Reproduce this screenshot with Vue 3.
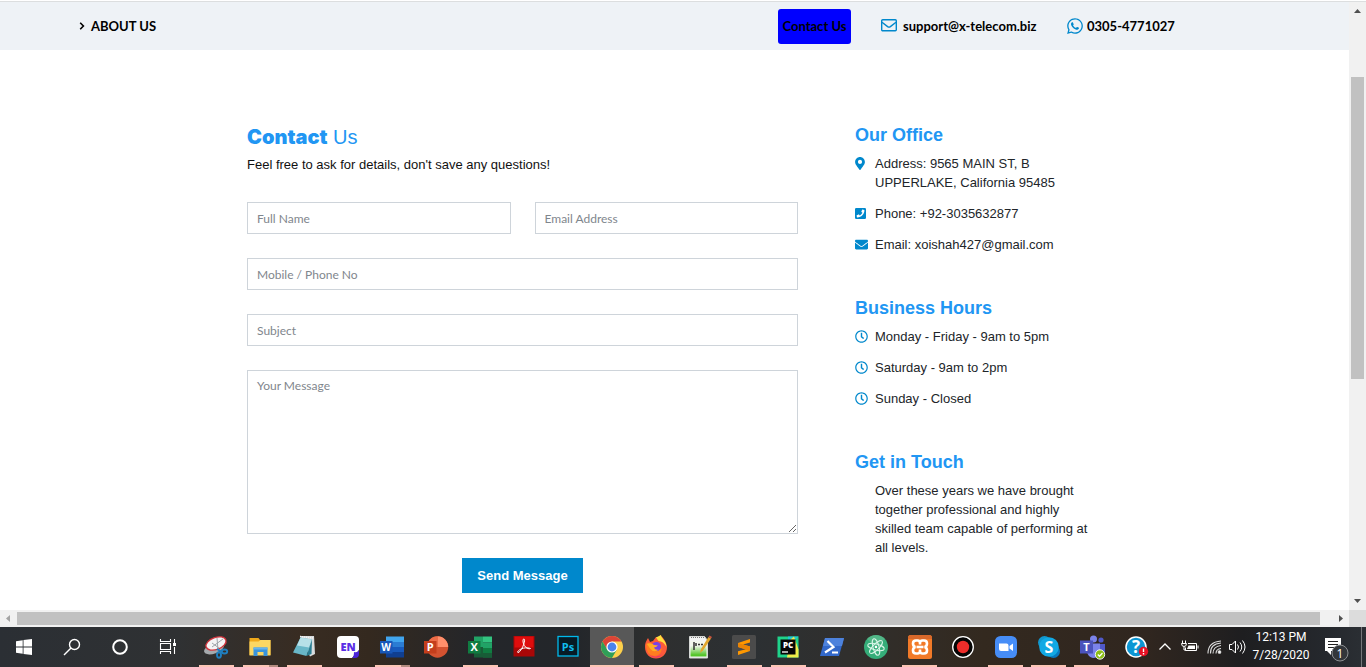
<script setup>
import { ref } from 'vue'

const fullName = ref('')
const email = ref('')
const phone = ref('')
const subject = ref('')
const message = ref('')

const hours = ['Monday - Friday - 9am to 5pm', 'Saturday - 9am to 2pm', 'Sunday - Closed']
</script>

<template>
  <div class="desktop">
    <div class="browser">
      <div class="page">
        <header class="topbar">
          <a class="nav-link about" href="#about">
            <svg class="caret" viewBox="0 0 6 8" aria-hidden="true"><path d="M1.2 .8 4.4 4 1.2 7.2" fill="none" stroke="#000" stroke-width="1.6" /></svg>
            ABOUT US
          </a>
          <nav class="nav-right">
            <a class="nav-link contact" href="#contact">Contact Us</a>
            <a class="nav-link mail" href="#mail">
              <svg width="16" height="16" viewBox="0 0 16 16" fill="none" stroke="#0088cc" stroke-width="1.4" aria-hidden="true"><rect x=".7" y="1.7" width="14.6" height="11" rx="1" /><path d="M1 4.2 6.6 8.600Q8 9.600 9.4 8.600L15 4.2" /></svg>
              support@x-telecom.biz
            </a>
            <a class="nav-link tel" href="#tel">
              <svg width="16" height="18" viewBox="0 0 448 512" fill="#0088cc" aria-hidden="true"><path d="M380.9 97.1C339 55.1 283.2 32 223.9 32c-122.4 0-222 99.6-222 222 0 39.1 10.2 77.3 29.6 111L0 480l117.7-30.9c32.4 17.7 68.9 27 106.1 27h.1c122.3 0 224.1-99.6 224.1-222 0-59.3-25.2-115-67.1-157zm-157 341.6c-33.2 0-65.7-8.9-94-25.7l-6.7-4-69.8 18.3L72 359.2l-4.4-7c-18.5-29.4-28.2-63.3-28.2-98.2 0-101.7 82.8-184.5 184.6-184.5 49.3 0 95.6 19.2 130.4 54.1 34.8 34.9 56.2 81.2 56.1 130.5 0 101.8-84.9 184.6-186.6 184.6zm101.2-138.2c-5.5-2.8-32.8-16.2-37.9-18-5.1-1.9-8.8-2.8-12.5 2.8-3.7 5.6-14.3 18-17.6 21.8-3.2 3.7-6.5 4.2-12 1.4-32.6-16.3-54-29.1-75.5-66-5.7-9.8 5.7-9.1 16.3-30.3 1.8-3.7.9-6.9-.5-9.7-1.4-2.8-12.5-30.1-17.1-41.2-4.5-10.8-9.1-9.3-12.5-9.5-3.2-.2-6.9-.2-10.6-.2-3.7 0-9.7 1.4-14.8 6.9-5.1 5.6-19.4 19-19.4 46.3 0 27.3 19.9 53.7 22.6 57.4 2.8 3.7 39.1 59.7 94.8 83.8 35.2 15.2 49 16.5 66.6 13.9 10.7-1.6 32.8-13.4 37.4-26.4 4.6-13 4.6-24.1 3.2-26.4-1.3-2.5-5-3.9-10.5-6.6z" /></svg>
              0305-4771027
            </a>
          </nav>
        </header>

        <main class="content">
          <form class="form" @submit.prevent>
            <div class="intro">
              <h2><strong>Contact</strong> Us</h2>
              <p>Feel free to ask for details, don't save any questions!</p>
            </div>
            <div class="row">
              <input v-model="fullName" class="field" type="text" placeholder="Full Name" aria-label="Full Name" />
              <input v-model="email" class="field" type="email" placeholder="Email Address" aria-label="Email Address" />
            </div>
            <input v-model="phone" class="field" type="tel" placeholder="Mobile / Phone No" aria-label="Mobile / Phone No" />
            <input v-model="subject" class="field" type="text" placeholder="Subject" aria-label="Subject" />
            <textarea v-model="message" class="field area" placeholder="Your Message" aria-label="Your Message"></textarea>
            <button class="send" type="submit">Send Message</button>
          </form>

          <aside class="side">
            <section>
              <h3>Our Office</h3>
              <ul>
                <li>
                  <svg width="10" height="13" viewBox="0 0 384 512" aria-hidden="true"><path d="M172.268 501.67C26.97 291.031 0 269.413 0 192 0 85.961 85.961 0 192 0s192 85.961 192 192c0 77.413-26.97 99.031-172.268 309.67-9.535 13.774-29.93 13.773-39.464 0zM192 272c44.183 0 80-35.817 80-80s-35.817-80-80-80-80 35.817-80 80 35.817 80 80 80z" /></svg>
                  <span>Address: 9565 MAIN ST, B<br />UPPERLAKE, California 95485</span>
                </li>
                <li>
                  <svg width="11" height="13" viewBox="0 0 448 512" aria-hidden="true"><path d="M400 32H48A48 48 0 0 0 0 80v352a48 48 0 0 0 48 48h352a48 48 0 0 0 48-48V80a48 48 0 0 0-48-48zM94 416c-7.033 0-13.057-4.873-14.616-11.627l-14.998-65a15 15 0 0 1 8.707-17.16l69.998-29.999a15 15 0 0 1 17.518 4.289l30.997 37.885c48.944-22.963 88.297-62.858 110.781-110.78l-37.886-30.997a15.001 15.001 0 0 1-4.289-17.518l30-69.998a15 15 0 0 1 17.16-8.707l65 14.998A14.997 14.997 0 0 1 384 126c0 160.292-129.945 290-290 290z" /></svg>
                  <span>Phone: +92-3035632877</span>
                </li>
                <li>
                  <svg width="13" height="13" viewBox="0 0 512 512" aria-hidden="true"><path d="M502.3 190.8c3.9-3.1 9.7-.2 9.7 4.7V400c0 26.5-21.5 48-48 48H48c-26.5 0-48-21.5-48-48V195.6c0-5 5.7-7.8 9.7-4.7 22.4 17.4 52.1 39.5 154.1 113.6 21.1 15.4 56.7 47.8 92.2 47.6 35.7.3 72-32.8 92.3-47.6 102-74.1 131.6-96.3 154-113.7zM256 320c23.2.4 56.6-29.2 73.4-41.4 132.7-96.3 142.8-104.7 173.4-128.7 5.8-4.5 9.2-11.5 9.2-18.9v-19c0-26.5-21.5-48-48-48H48c-26.5 0-48 21.5-48 48v19c0 7.4 3.4 14.3 9.2 18.9 30.6 23.9 40.7 32.4 173.4 128.7 16.8 12.2 50.2 41.8 73.4 41.4z" /></svg>
                  <span>Email: xoishah427@gmail.com</span>
                </li>
              </ul>
            </section>
            <section>
              <h3>Business Hours</h3>
              <ul>
                <li v-for="h in hours" :key="h">
                  <svg width="13" height="13" viewBox="0 0 512 512" aria-hidden="true"><path d="M256 8C119 8 8 119 8 256s111 248 248 248 248-111 248-248S393 8 256 8zm0 448c-110.5 0-200-89.5-200-200S145.5 56 256 56s200 89.5 200 200-89.5 200-200 200zm61.8-104.4l-84.9-61.7c-3.1-2.3-4.9-5.9-4.9-9.7V116c0-6.6 5.4-12 12-12h32c6.6 0 12 5.4 12 12v141.7l66.8 48.6c5.4 3.9 6.5 11.4 2.6 16.8L334.6 349c-3.9 5.3-11.4 6.5-16.8 2.6z" /></svg>
                  <span>{{ h }}</span>
                </li>
              </ul>
            </section>
            <section>
              <h3>Get in Touch</h3>
              <p class="touch">Over these years we have brought together professional and highly skilled team capable of performing at all levels.</p>
            </section>
          </aside>
        </main>
      </div>

      <div class="vbar" aria-hidden="true">
        <svg class="arrow" viewBox="0 0 17 17"><path d="M5 11h7L8.500 7z" fill="#505050" /></svg>
        <div class="vtrack"><i class="v-before"></i><i class="v-thumb"></i><i class="v-after"></i></div>
        <svg class="arrow" viewBox="0 0 17 17"><path d="M5 6h7L8.500 10z" fill="#505050" /></svg>
      </div>
    </div>

    <div class="hbar" aria-hidden="true">
      <svg class="arrow" viewBox="0 0 17 17"><path d="M10 5v7L6 8.500z" fill="#a3a3a3" /></svg>
      <div class="htrack"><i class="h-thumb"></i><i class="h-after"></i></div>
      <svg class="arrow" viewBox="0 0 17 17"><path d="M7 5v7l4-3.500z" fill="#505050" /></svg>
      <span class="corner"></span>
    </div>

    <footer class="taskbar">
      <div class="system">
        <button class="cell" aria-label="Start">
          <svg viewBox="0 0 24 24" fill="#fff"><path d="M4 6.200 10.700 5.200V11.500H4zM11.500 5.100 20 4V11.500H11.500zM4 12.400H10.700V18.800L4 17.800zM11.500 12.400H20V20L11.500 18.900z" /></svg>
        </button>
        <button class="cell" aria-label="Search">
          <svg viewBox="0 0 24 24" fill="none" stroke="#fff" stroke-width="1.400"><circle cx="14.500" cy="9.500" r="5" /><path d="M11 13 4 20" /></svg>
        </button>
        <button class="cell" aria-label="Cortana">
          <svg viewBox="0 0 24 24" fill="none" stroke="#fff" stroke-width="2"><circle cx="12" cy="12" r="6.800" /></svg>
        </button>
        <button class="cell" aria-label="Task View">
          <svg viewBox="0 0 24 24" fill="none" stroke="#fff" stroke-width="1.100"><path d="M4.500 4v2.500h10V4M4.500 19v-2.500h10V19M4.500 8.500h10v6h-10zM18.500 4v5M18.500 12v7" /><rect x="17" y="8" width="3" height="3" fill="#fff" stroke="none" /></svg>
        </button>
      </div>

      <div class="apps">
        <button class="cell run" aria-label="Snipping Tool">
          <svg viewBox="0 0 24 24"><ellipse cx="10" cy="13.500" rx="10.500" ry="5" fill="#a6aaad" transform="rotate(-20 10 13.500)" /><ellipse cx="12" cy="8.500" rx="10.500" ry="6" fill="#f4f4f5" stroke="#d1333c" stroke-width="1.300" transform="rotate(-20 12 8.500)" /><path d="M8 12 19 4M13 3l1 12M8 8l7 5" stroke="#a0a5aa" stroke-width="1" /><g fill="none" stroke="#1f7fc0" stroke-width="1.900"><ellipse cx="15" cy="20" rx="2" ry="2.700" /><ellipse cx="20.500" cy="16.500" rx="2.700" ry="2" /><path d="m13 14 5 3" /></g></svg>
        </button>
        <button class="cell run many" aria-label="File Explorer">
          <svg viewBox="0 0 24 24"><path d="M1.500 3h9l1.500 2h10.500v15h-21z" fill="#f0a91b" /><path d="M1.500 6.500h9l2-1.500h10v15.500h-21z" fill="#fbd763" /><path d="M5.500 12.500h14V21h-4v-4h-6v4h-4z" fill="#3994dc" /><path d="M5.500 12.500h14v2h-14z" fill="#67b4ec" /></svg>
        </button>
        <button class="cell run" aria-label="Notepad">
          <svg viewBox="0 0 24 24"><path d="M8 1h14l1 18-5 2.500z" fill="#d8dcde" /><path d="M8.500 2.500 20 4.500 14.500 21 1 17.500z" fill="#69b7c8" /><path d="m8.500 2.500 11.500 2-3 8-12-2z" fill="#b7e0e8" /><path d="M8 1.500 21 3" stroke="#f5f5f5" stroke-width="1.500" stroke-dasharray="1 1" /><path d="m20 4.500-5.500 16.500 5-2z" fill="#287d92" /></svg>
        </button>
        <button class="cell" aria-label="Language tool">
          <svg viewBox="0 0 24 24"><path d="M5 1h14q4 0 4 4v10l-7 8H5q-4 0-4-4V5q0-4 4-4z" fill="#fff" /><path d="M23 15v4q0 4-4 4h-3q2-1 2-6 4 1 5-2z" fill="#4a24d8" /><text x="12" y="15.500" text-anchor="middle" font-size="11" font-weight="800" fill="#5a2ee5">EN</text></svg>
        </button>
        <button class="cell run many" aria-label="Word">
          <svg viewBox="0 0 24 24"><path d="M6 1.500h18v5.500H6z" fill="#41a5ee" /><path d="M6 7h18v5H6z" fill="#2b7cd3" /><path d="M6 12h18v5H6z" fill="#185abd" /><path d="M6 17h18v5.500H6z" fill="#103f91" /><path d="M0 6h12.500v12.500H0z" fill="#1857b8" /><text x="6.200" y="16" text-anchor="middle" font-size="10" font-weight="700" fill="#fff">W</text></svg>
        </button>
        <button class="cell" aria-label="PowerPoint">
          <svg viewBox="0 0 24 24"><circle cx="13.500" cy="12" r="10.700" fill="#d35230" /><path d="M13.500 1.300A10.700 10.700 0 0 1 24.200 12H13.500z" fill="#ff8f6b" /><path d="M13.500 1.300A10.700 10.700 0 0 0 2.800 12h10.700z" fill="#ed6c47" /><path d="M0 6h12.500v12.500H0z" fill="#c43e1c" /><text x="6.200" y="16" text-anchor="middle" font-size="11" font-weight="700" fill="#fff">P</text></svg>
        </button>
        <button class="cell run" aria-label="Excel">
          <svg viewBox="0 0 24 24"><path d="M6 1.500h9v6H6zM6 7.500h9v6H6z" fill="#21a366" /><path d="M15 1.500h9v6h-9z" fill="#33c481" /><path d="M15 7.500h9v5.500h-9z" fill="#21a366" /><path d="M15 13h9v9.500h-9z" fill="#107c41" /><path d="M6 12h9v10.500H6zM6 18h18v4.500H6z" fill="#185c37" /><path d="M0 6h12.500v12.500H0z" fill="#107c41" /><text x="6.200" y="16" text-anchor="middle" font-size="11" font-weight="700" fill="#fff">X</text></svg>
        </button>
        <button class="cell" aria-label="Acrobat Reader">
          <svg viewBox="0 0 24 24"><path d="M1.500 1h21v20.500h-21z" fill="#a90707" /><path d="M2.500 1.500h19v11h-19z" fill="#df0d0d" /><path d="M5.500 17c2-4 9.500-5 13-3.500-3 1.500-8-3-7.500-8.500.500-2 2-1 1.500 1C12 10.500 8 17.500 6 17.700z" fill="none" stroke="#fff" stroke-width="1" /></svg>
        </button>
        <button class="cell" aria-label="Photoshop">
          <svg viewBox="0 0 24 24"><rect x="2" y="1.500" width="20" height="19.500" fill="#071b26" stroke="#00b9ec" stroke-width="1.300" /><text x="12" y="15.500" text-anchor="middle" font-size="11" font-weight="700" fill="#10bdf0">Ps</text></svg>
        </button>
        <button class="cell run active" aria-label="Chrome">
          <svg viewBox="0 0 24 24"><circle cx="12" cy="12" r="11" fill="#fdd04b" /><path d="M2.500 6.500A11 11 0 0 1 21.500 6.500H12L7.200 14.800z" fill="#db4437" /><path d="M2.500 6.500A11 11 0 0 0 12 23l4.800-8.300L7.300 14.700z" fill="#2f9e58" /><circle cx="12" cy="12" r="5.600" fill="#fff" /><circle cx="12" cy="12" r="4.400" fill="#4a83ec" /></svg>
        </button>
        <button class="cell run" aria-label="Firefox">
          <svg viewBox="0 0 24 24"><path d="M1 12C1 7 3 5 4 3l2 4 3-1 3-4 4 1V0q6 5 7 12c0 7-5 11.500-11 11.500S1 19 1 12z" fill="#fb5a3a" /><path d="M12 2.500 17 0c0 3 5.500 6 5.500 12q-3-6-8-6z" fill="#ffdf3d" /><path d="M2 9q3-3 7 1l3 1-3 3q4 4 9-1-1 8-8 8Q2 20 2 9z" fill="#ff7d20" /><circle cx="12.500" cy="11.500" r="4.500" fill="#7542e5" /><path d="M3 9q4-2 7 1l4 .500q-2 2-4 2 1 3 5 2-5 4-9-1z" fill="#ffad26" /><path d="M4 19q7 6 15 0-7 7-15 0z" fill="#e42587" /></svg>
        </button>
        <button class="cell" aria-label="Notepad++">
          <svg viewBox="0 0 24 24"><defs><linearGradient id="npp" x2="0" y2="1"><stop offset=".300" stop-color="#f3f7ed" /><stop offset=".900" stop-color="#54c52a" /></linearGradient></defs><path d="M1.500 1.500h15l3 4V23h-18z" fill="#f3f4f3" stroke="#d6d8d6" /><path d="M2.500 6h16v15.500h-16z" fill="url(#npp)" /><path d="M3 2.500h13" stroke="#777" stroke-dasharray="1 1" /><path d="M6 7v8M8 8v3M10 9.500h2M13 9.500h2" stroke="#333" stroke-width="1.500" /><path d="m12 18 1-4L20.500 2l2.500 1.500-8 12z" fill="#e3a72c" /><path d="m20.500 2 1-1.500L24 2l-1 1.500z" fill="#c8523f" /></svg>
        </button>
        <button class="cell run" aria-label="Sublime Text">
          <svg viewBox="0 0 24 24"><rect x="0" y="0" width="24" height="24" rx="1.500" fill="#4b4b4b" /><path d="M18 4 6 8v4l8 2.200-8 2V20l12-4v-4.500l-7-2 7-2z" fill="#ff9800" /><path d="M6 8v4l12 4v-4.500z" fill="#e98406" /></svg>
        </button>
        <button class="cell run" aria-label="PyCharm">
          <svg viewBox="0 0 24 24"><path d="M1.500 1.500h21v21h-21z" fill="#1fd38b" /><path d="M12 1.500h10.500L12 12z" fill="#21c8d8" /><path d="M14 5 18 1.500l4.500 13v8H11z" fill="#f0ec4a" /><rect x="4.500" y="4.500" width="15" height="15" fill="#060606" /><text x="12" y="12.500" text-anchor="middle" font-size="8" font-weight="800" fill="#fff">PC</text><path d="M6 17h6" stroke="#fff" stroke-width="1.300" /></svg>
        </button>
        <button class="cell" aria-label="PowerShell">
          <svg viewBox="0 0 24 24"><path d="M5 3h19l-5 18H0z" fill="#3268c9" /><path d="M5 3h19l-2 8H3z" fill="#4d82dc" /><path d="m7.500 6 6 6L5 17.500M12 17.500h6" fill="none" stroke="#fff" stroke-width="2.200" /></svg>
        </button>
        <button class="cell" aria-label="Atom">
          <svg viewBox="0 0 24 24"><circle cx="12" cy="12" r="12" fill="#35ad79" /><path d="M3 4a12 12 0 0 1 18 0L12 12z" fill="#66bd91" opacity=".600" /><g fill="none" stroke="#d9f5e8" stroke-width="1"><ellipse cx="12" cy="12" rx="8.500" ry="3" transform="rotate(15 12 12)" /><ellipse cx="12" cy="12" rx="8.500" ry="3" transform="rotate(75 12 12)" /><ellipse cx="12" cy="12" rx="8.500" ry="3" transform="rotate(135 12 12)" /></g><circle cx="12" cy="12" r="1.300" fill="#fff" /></svg>
        </button>
        <button class="cell run" aria-label="XAMPP">
          <svg viewBox="0 0 24 24"><rect width="24" height="24" rx="2.500" fill="#f27a28" /><path d="M2 0h20l2 2v2H0V2z" fill="#d8682a" /><path d="M12 9.500V8Q12 5.500 14.500 5.500H16Q19 5.500 19 8.500T16.500 12Q19 12.500 19 15.500T16 18.500H14.500Q12 18.500 12 16V14.500M12 9.500V8Q12 5.500 9.500 5.500H8Q5 5.500 5 8.500T7.500 12Q5 12.500 5 15.500T8 18.500H9.500Q12 18.500 12 16V14.500" fill="none" stroke="#fff" stroke-width="2.600" /><path d="M8.500 12h7" stroke="#fff" stroke-width="2.600" /></svg>
        </button>
        <button class="cell" aria-label="Recorder">
          <svg viewBox="0 0 24 24"><circle cx="12" cy="12" r="10.300" fill="#050505" stroke="#fff" stroke-width="1.300" /><circle cx="12" cy="12" r="6.200" fill="#ee2d2a" /></svg>
        </button>
        <button class="cell run" aria-label="Zoom">
          <svg viewBox="0 0 24 24"><rect x="1" y="1" width="22" height="22" rx="5.500" fill="#468df7" /><path d="M5 8.500h7.500q2 0 2 2V16H7q-2 0-2-2zM15.500 11 19 8.500V16l-3.500-2.500z" fill="#fff" /></svg>
        </button>
        <button class="cell run" aria-label="Skype">
          <svg viewBox="0 0 24 24"><circle cx="7.500" cy="7.500" r="6.500" fill="#1197ce" /><circle cx="16.500" cy="16.500" r="6.500" fill="#0879be" /><circle cx="12" cy="12" r="9.800" fill="#11a9e4" /><text x="12" y="17.500" text-anchor="middle" font-size="16" font-weight="700" fill="#fff">S</text></svg>
        </button>
        <button class="cell run" aria-label="Teams">
          <svg viewBox="0 0 24 24"><circle cx="13.500" cy="4" r="3.500" fill="#7b83eb" /><circle cx="21" cy="5" r="2.600" fill="#5059c9" /><path d="M18 9h7v8q-2 4-7 2z" fill="#5059c9" /><path d="M7 8.500h13V17q-2 6-7 6-5-1-6-6z" fill="#7b83eb" /><path d="M0 5.500h13v13H0z" fill="#4b53bc" /><text x="6.500" y="15.800" text-anchor="middle" font-size="11" font-weight="700" fill="#fff">T</text><circle cx="20" cy="19.500" r="4.700" fill="#8cbd18" stroke="#fff" stroke-width=".900" /><path d="m17.800 19.500 1.700 1.700 3-3.200" fill="none" stroke="#fff" stroke-width="1.300" /></svg>
        </button>
      </div>

      <div class="tray">
        <button class="cell" aria-label="Help">
          <svg viewBox="0 0 24 24"><circle cx="12" cy="12" r="10" fill="#0c96d3" stroke="#fff" stroke-width="1.500" /><text x="12" y="18" text-anchor="middle" font-size="17" font-weight="700" fill="#fff">?</text><circle cx="19.500" cy="16.500" r="4.700" fill="#e81123" /><path d="M19.500 13.500v3.500M19.500 18v1.500" stroke="#fff" stroke-width="1.400" /></svg>
        </button>
        <button class="cell" aria-label="Show hidden icons">
          <svg viewBox="0 0 24 24" fill="none" stroke="#fff" stroke-width="1.300"><path d="m6.500 14.500 5.500-5.500 5.500 5.500" /></svg>
        </button>
        <button class="cell" aria-label="Battery">
          <svg viewBox="0 0 24 24" fill="none" stroke="#fff"><path d="M10 8.500h8.500v7h-11v-3M20 10.500v3" /><path d="M10.500 10.500H17v3.500H9z" fill="#fff" stroke="none" /><path d="M4.500 5.500v2.500M7.500 5.500v2.500M3.500 8.500h5q0 3-2.500 3t-2.500-3M6 11.500v3.500h2" /></svg>
        </button>
        <button class="cell" aria-label="Wireless network">
          <svg viewBox="0 0 24 24" fill="none" stroke="#ddd" stroke-width="1.100"><circle cx="16.500" cy="17" r="1.300" fill="#fff" /><path d="M13 18.500q0-4.500 5-5M10 18.500q0-7 8-8M7.500 18.500Q7 9 18 8M5 18.500Q5 7 18 6" /></svg>
        </button>
        <button class="cell" aria-label="Volume">
          <svg viewBox="0 0 24 24" fill="none" stroke="#fff"><path d="M3.500 9.500h2.500L9.500 6v12L6 14.500H3.500zM11.500 9.500q2 2.500 0 5M14 7.500q3.500 4.500 0 9M16.500 5.500q5 6.500 0 13" /></svg>
        </button>
        <div class="clock"><time>12:13 PM</time><time>7/28/2020</time></div>
        <button class="cell" aria-label="Notifications">
          <svg class="note" viewBox="0 0 32 32"><path d="M5 7h16v13H11v4l-4-4H5z" fill="#fff" /><path d="M8 10.500h10M8 13.500h10M8 16.500h6" stroke="#222" /><circle cx="20" cy="22" r="8" fill="#33363a" stroke="#8d8f92" /><text x="20" y="26.500" text-anchor="middle" font-size="12" fill="#fff">1</text></svg>
        </button>
        <span class="edge"></span>
      </div>
    </footer>
  </div>
</template>

<style>
body {
  margin: 0;
  background: #fff;
}
</style>

<style scoped>
* {
  box-sizing: border-box;
}

.desktop {
  display: flex;
  flex-direction: column;
  height: 100vh;
  overflow: hidden;
  font-family: "Liberation Sans", Arial, sans-serif;
  font-size: 13px;
  line-height: 19px;
  color: #212529;
}

.browser {
  display: flex;
  flex: 1;
  min-height: 0;
  margin-top: 1px;
  border-top: 1px solid #dcdedf;
}

.page {
  flex: 1;
  min-width: 0;
  overflow: hidden;
}

.topbar {
  display: flex;
  align-items: center;
  justify-content: space-between;
  height: 48px;
  padding: 0 182px 0 79px;
  background: #eef2f6;
}

.nav-link {
  display: flex;
  align-items: center;
  gap: 6px;
  color: #000;
  font-family: Lato, sans-serif;
  font-size: 13px;
  font-weight: 700;
  text-decoration: none;
  white-space: nowrap;
}

.nav-link svg {
  flex: none;
}

.caret {
  width: 6px;
  height: 8px;
}

.nav-right {
  display: flex;
  align-items: center;
  gap: 30px;
}

.contact {
  justify-content: center;
  width: 73px;
  height: 35px;
  border-radius: 3px;
  background: #0000ff;
}

.mail {
  width: 156px;
}

.tel {
  width: 100px;
  gap: 4px;
}

.content {
  display: grid;
  grid-template-columns: 551fr 247fr;
  gap: 57px;
  max-width: 855px;
  margin: 0 auto;
  padding-top: 74px;
}

.form {
  display: flex;
  flex-direction: column;
  gap: 24px;
}

.intro {
  margin-bottom: 4px;
  color: #111;
}

h2,
h3,
p,
ul {
  margin: 0;
}

h2 {
  margin-bottom: 5px;
  color: #2196f3;
  font-size: 20px;
  font-weight: 400;
  line-height: 26px;
}

h2 strong {
  font-family: Inter, sans-serif;
  font-weight: 900;
}

.row {
  display: grid;
  grid-template-columns: 1fr 1fr;
  gap: 24px;
}

.field {
  display: block;
  width: 100%;
  height: 32px;
  padding: 0 9px;
  border: 1px solid #ced4da;
  border-radius: 0;
  outline: 0;
  background: #fff;
  color: #495057;
  font-family: Lato, sans-serif;
  font-size: 12px;
  line-height: 19px;
}

.field::placeholder {
  color: #7f868d;
  opacity: 1;
}

.area {
  height: 164px;
  padding: 5px 9px;
  resize: vertical;
}

.send {
  align-self: center;
  width: 121px;
  height: 35px;
  padding: 0;
  border: 0;
  background: #0088cc;
  color: #fff;
  font-family: inherit;
  font-size: 13px;
  font-weight: 700;
}

.side {
  display: flex;
  flex-direction: column;
  gap: 43px;
}

h3 {
  margin-bottom: 8px;
  color: #2196f3;
  font-size: 18px;
  font-weight: 700;
  line-height: 22px;
}

ul {
  display: flex;
  flex-direction: column;
  gap: 12px;
  padding: 0;
  list-style: none;
}

li {
  display: grid;
  grid-template-columns: 20px 1fr;
}

li svg {
  margin-top: 3px;
  fill: #0088cc;
}

.touch {
  padding: 0 12px 0 20px;
}

.vbar {
  display: flex;
  flex-direction: column;
  width: 17px;
  background: #f1f1f1;
}

.arrow {
  flex: none;
  width: 17px;
  height: 17px;
}

.vtrack {
  display: flex;
  flex: 1;
  flex-direction: column;
  padding: 0 2px;
}

.v-before {
  flex: 58;
}

.v-thumb {
  flex: 302;
  background: #c1c1c1;
}

.v-after {
  flex: 214;
}

.hbar {
  display: flex;
  flex: none;
  height: 17px;
  background: #f1f1f1;
}

.htrack {
  display: flex;
  flex: 1;
  padding: 2px 0;
}

.h-thumb {
  flex: 1303;
  background: #c1c1c1;
}

.h-after {
  flex: 12;
}

.corner {
  width: 17px;
  background: #dcdcdc;
}

.taskbar {
  display: flex;
  flex: none;
  height: 40px;
  background: linear-gradient(90deg, #2b2f34 0, #2f3133 13%, #382c22 22%, #34291f 27%, #24262a 35%, #23262a 42%, #2e2f2f 48%, #2c3033 55%, #302f2d 62%, #33291f 72%, #30261f 84%, #1e1e20 91%, #25282d 97%, #2b2f34 100%);
  font-family: "Open Sans", "Noto Sans", sans-serif;
}

.system {
  display: grid;
  grid-template-columns: repeat(4, 48px);
  margin-right: 2px;
}

.apps {
  display: grid;
  grid-template-columns: repeat(16, 44px) repeat(5, 43px);
}

.cell {
  display: flex;
  align-items: center;
  justify-content: center;
  min-width: 0;
  height: 40px;
  padding: 0;
  border: 0;
  background: none;
  font-family: inherit;
}

.cell svg {
  flex: none;
  width: 24px;
  height: 24px;
  overflow: visible;
}

.run {
  background: linear-gradient(#fcc5b5, #fcc5b5) center bottom / 35px 2px no-repeat;
}

.many {
  background: linear-gradient(90deg, #fcc5b5 26px, #b48c80 26px) center bottom / 35px 2px no-repeat;
}

.active {
  background: linear-gradient(#fcc5b5, #fcc5b5) center bottom / 100% 2px no-repeat #585858;
}

.tray {
  display: grid;
  grid-template-columns: 28px 30px 20px 29px 18px 68px 42px 9px;
  margin-left: auto;
}

.clock {
  display: flex;
  flex-direction: column;
  align-items: center;
  justify-content: center;
  padding-bottom: 3px;
  color: #fff;
  font-family: Roboto, sans-serif;
  font-size: 12px;
  line-height: 18px;
}

.cell .note {
  width: 32px;
  height: 32px;
}

.edge {
  width: 1px;
  margin-left: 4px;
  background: #75777a;
}
</style>
